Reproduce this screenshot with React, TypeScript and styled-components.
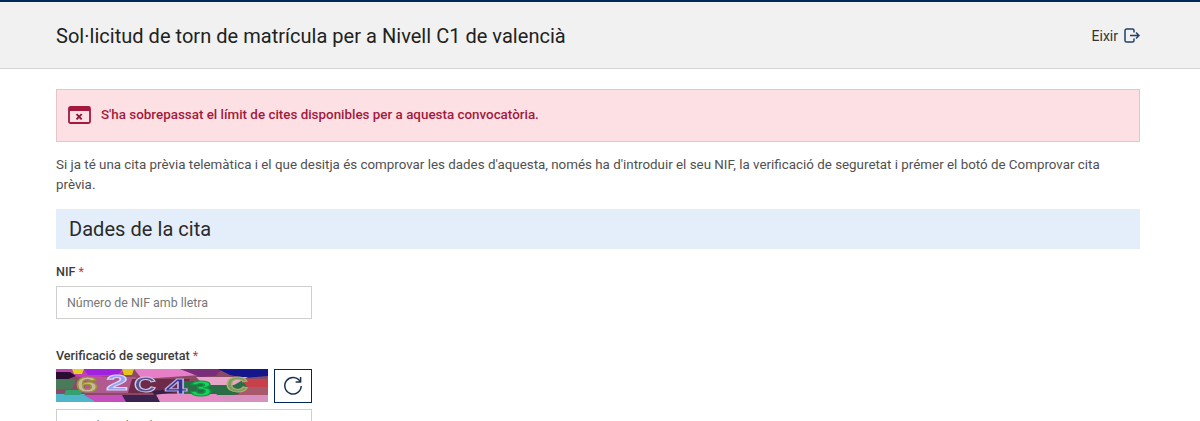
import React from 'react';
import styled, { createGlobalStyle } from 'styled-components';

const GlobalStyle = createGlobalStyle`
  html, body {
    margin: 0;
    padding: 0;
    background: #fff;
    overflow: hidden;
  }
  body {
    font-family: Roboto, "Liberation Sans", sans-serif;
    color: #444;
  }
`;

const Page = styled.div`
  width: 1200px;
  height: 421px;
  overflow: hidden;
`;

const Header = styled.header`
  height: 69px;
  box-sizing: border-box;
  border-top: 2px solid #002a5c;
  border-bottom: 1px solid #d4d4d4;
  background: #f1f1f1;
  padding: 1px 60px 0 56px;
  display: flex;
  align-items: center;
  justify-content: space-between;
  margin-bottom: 20px;
`;

const Title = styled.h1`
  margin: 0;
  font-size: 20px;
  font-weight: 400;
  letter-spacing: 0.03px;
  color: #212121;
`;

const Logout = styled.a`
  display: flex;
  align-items: center;
  gap: 6px;
  font-size: 14px;
  color: #333;
`;

const Content = styled.main`
  padding: 0 60px 0 56px;
`;

const Alert = styled.div`
  height: 53px;
  box-sizing: border-box;
  background: #fce0e4;
  border: 1px solid #e8c3c9;
  display: flex;
  align-items: center;
  gap: 10px;
  padding: 0 0 2px 11px;
  font-size: 13.4px;
  font-weight: 500;
  color: #a3193d;
`;

const Intro = styled.p`
  margin: 13px 0 14px;
  font-size: 13.37px;
  line-height: 20px;
  color: #505050;
`;

const SectionTitle = styled.h2`
  margin: 0 0 15px;
  height: 40px;
  padding-left: 13px;
  background: #e3eefa;
  font-size: 20px;
  font-weight: 400;
  line-height: 40px;
  letter-spacing: 0.05px;
  color: #2a2a2a;
`;

const Field = styled.div`
  width: 256px;
  margin-bottom: 29px;
`;

const Label = styled.label`
  display: block;
  font-size: 12.6px;
  font-weight: 500;
  line-height: 16px;
  margin-bottom: 6px;
  color: #3c3c3c;
`;

const Required = styled.span`
  color: #c0395a;
  font-weight: 400;
`;

const TextInput = styled.input`
  display: block;
  width: 100%;
  height: 33px;
  box-sizing: border-box;
  border: 1px solid #cfcfcf;
  background: #fff;
  padding: 0 10px;
  font-family: inherit;
  font-size: 12.4px;
  outline: none;
  &::placeholder {
    color: #777;
    opacity: 1;
  }
`;

const CaptchaRow = styled.div`
  display: flex;
  justify-content: space-between;
  margin: -1px 0 6px;
`;

const RefreshButton = styled.button`
  width: 38px;
  height: 34px;
  padding: 0;
  border: 1px solid #002a5c;
  background: #fff;
  color: #002a5c;
  display: flex;
  align-items: center;
  justify-content: center;
`;

const AlertIcon = () => (
  <svg width="23" height="18" viewBox="0 0 23 18" fill="none">
    <rect x="1" y="1" width="21" height="16" rx="1.5" stroke="#a3193d" strokeWidth="1.8" />
    <rect x="1" y="1" width="21" height="4" fill="#a3193d" />
    <path d="M8.5 8.2l5.2 5.2M13.7 8.2l-5.2 5.2" stroke="#8f1535" strokeWidth="1.9" />
  </svg>
);

const LogoutIcon = () => (
  <svg width="16" height="15" viewBox="0 0 16 15" fill="none" stroke="#1f4068" strokeWidth="1.5">
    <path d="M10 4.5V2.6A1.6 1.6 0 0 0 8.4 1H2.6A1.6 1.6 0 0 0 1 2.6v9.8A1.6 1.6 0 0 0 2.6 14h5.8a1.6 1.6 0 0 0 1.6-1.6v-1.9" />
    <path d="M6 7.5h9M12 4.5l3 3-3 3" />
  </svg>
);

const RefreshIcon = () => (
  <svg width="20" height="20" viewBox="0 0 20 20" fill="none" stroke="#1c3350" strokeWidth="1.5">
    <path d="M17 5.5A8.2 8.2 0 1 0 18.2 10" />
    <path d="M17.6 1v5h-5" />
  </svg>
);

// captcha noise, painted back to front
const bands: [string, string][] = [
  ['#8b4a66', 'M0 0h212v33H0z'],
  ['#c23fb0', 'M0 0h70l-6 6-30 3-20-2L0 9z'],
  ['#2a1030', 'M0 3h14l6 4-10 4H0z'],
  ['#e3d21c', 'M16 0h12l-2 5h-8z'],
  ['#a020e0', 'M28 0h38l-4 6H32z'],
  ['#e3c61c', 'M66 0h12l-2 6h-8z'],
  ['#e77fc8', 'M78 0h46l20 6-58 4z'],
  ['#7a2f7a', 'M124 0h42l-6 7-16 1z'],
  ['#14148c', 'M162 0h50v7l-24 2-14-3z'],
  ['#4a7a5a', 'M0 10h20l-4 10H0z'],
  ['#b05a90', 'M30 8h50l-6 16H28z'],
  ['#6d2a4a', 'M76 10h58l-6 14H72z'],
  ['#2c6e46', 'M128 12h84v6l-44 10-40-4z'],
  ['#e7a6c8', 'M140 8h52l-14 8h-30z'],
  ['#c8404a', 'M186 10h26v13h-18z'],
  ['#a85a6a', 'M186 18h26v9h-30z'],
  ['#4fb5c8', 'M0 25h28l12 8H0z'],
  ['#c650c0', 'M28 26h48l-6 7H40z'],
  ['#3a2050', 'M66 26h34l4 7H70z'],
  ['#e58cc4', 'M100 25h60l12 8h-68z'],
  ['#d890c0', 'M160 26h52v7h-42z'],
  ['#35a070', 'M10 21h18l-4 5H8z'],
  ['#3a1f48', 'M96 22l30-3 2 3-30 4z'],
];

const glyphs: [string, number, number, string, string][] = [
  ['6', 20, 23, '#c9b8a0', '#9a9430'],
  ['2', 50, 21, '#9aa0f0', '#d8d8f8'],
  ['C', 78, 23, '#55508c', '#d0c8e8'],
  ['4', 109, 25, '#30309a', '#b8a8d8'],
  ['3', 134, 27, '#1fd060', '#0a9a40'],
  ['C', 170, 23, '#7f9a60', '#b0b070'],
];

const Captcha = () => (
  <svg width="212" height="33" viewBox="0 0 212 33">
    <filter id="soft">
      <feGaussianBlur stdDeviation="0.45" />
    </filter>
    <g filter="url(#soft)">
      {bands.map(([fill, d]) => (
        <path key={d} d={d} fill={fill} />
      ))}
      {glyphs.map(([ch, x, y, fill, stroke], i) => (
        <text key={i} x={x} y={y} fontFamily="Liberation Sans" fontWeight="700" fontSize="22" fill={fill} stroke={stroke} strokeWidth="1" textLength="22" lengthAdjust="spacingAndGlyphs">
          {ch}
        </text>
      ))}
    </g>
  </svg>
);

export default function App() {
  return (
    <Page>
      <GlobalStyle />
      <Header>
        <Title>Sol·licitud de torn de matrícula per a Nivell C1 de valencià</Title>
        <Logout>
          Eixir
          <LogoutIcon />
        </Logout>
      </Header>
      <Content>
        <Alert>
          <AlertIcon />
          S'ha sobrepassat el límit de cites disponibles per a aquesta convocatòria.
        </Alert>
        <Intro>
          Si ja té una cita prèvia telemàtica i el que desitja és comprovar les dades d'aquesta, només ha d'introduir el seu NIF, la verificació de seguretat i prémer el botó de Comprovar cita prèvia.
        </Intro>
        <SectionTitle>Dades de la cita</SectionTitle>
        <Field>
          <Label>NIF <Required>*</Required></Label>
          <TextInput placeholder="Número de NIF amb lletra" />
        </Field>
        <Field>
          <Label>Verificació de seguretat <Required>*</Required></Label>
          <CaptchaRow>
            <Captcha />
            <RefreshButton><RefreshIcon /></RefreshButton>
          </CaptchaRow>
          <TextInput placeholder="Introduïu el codi" />
        </Field>
      </Content>
    </Page>
  );
}
